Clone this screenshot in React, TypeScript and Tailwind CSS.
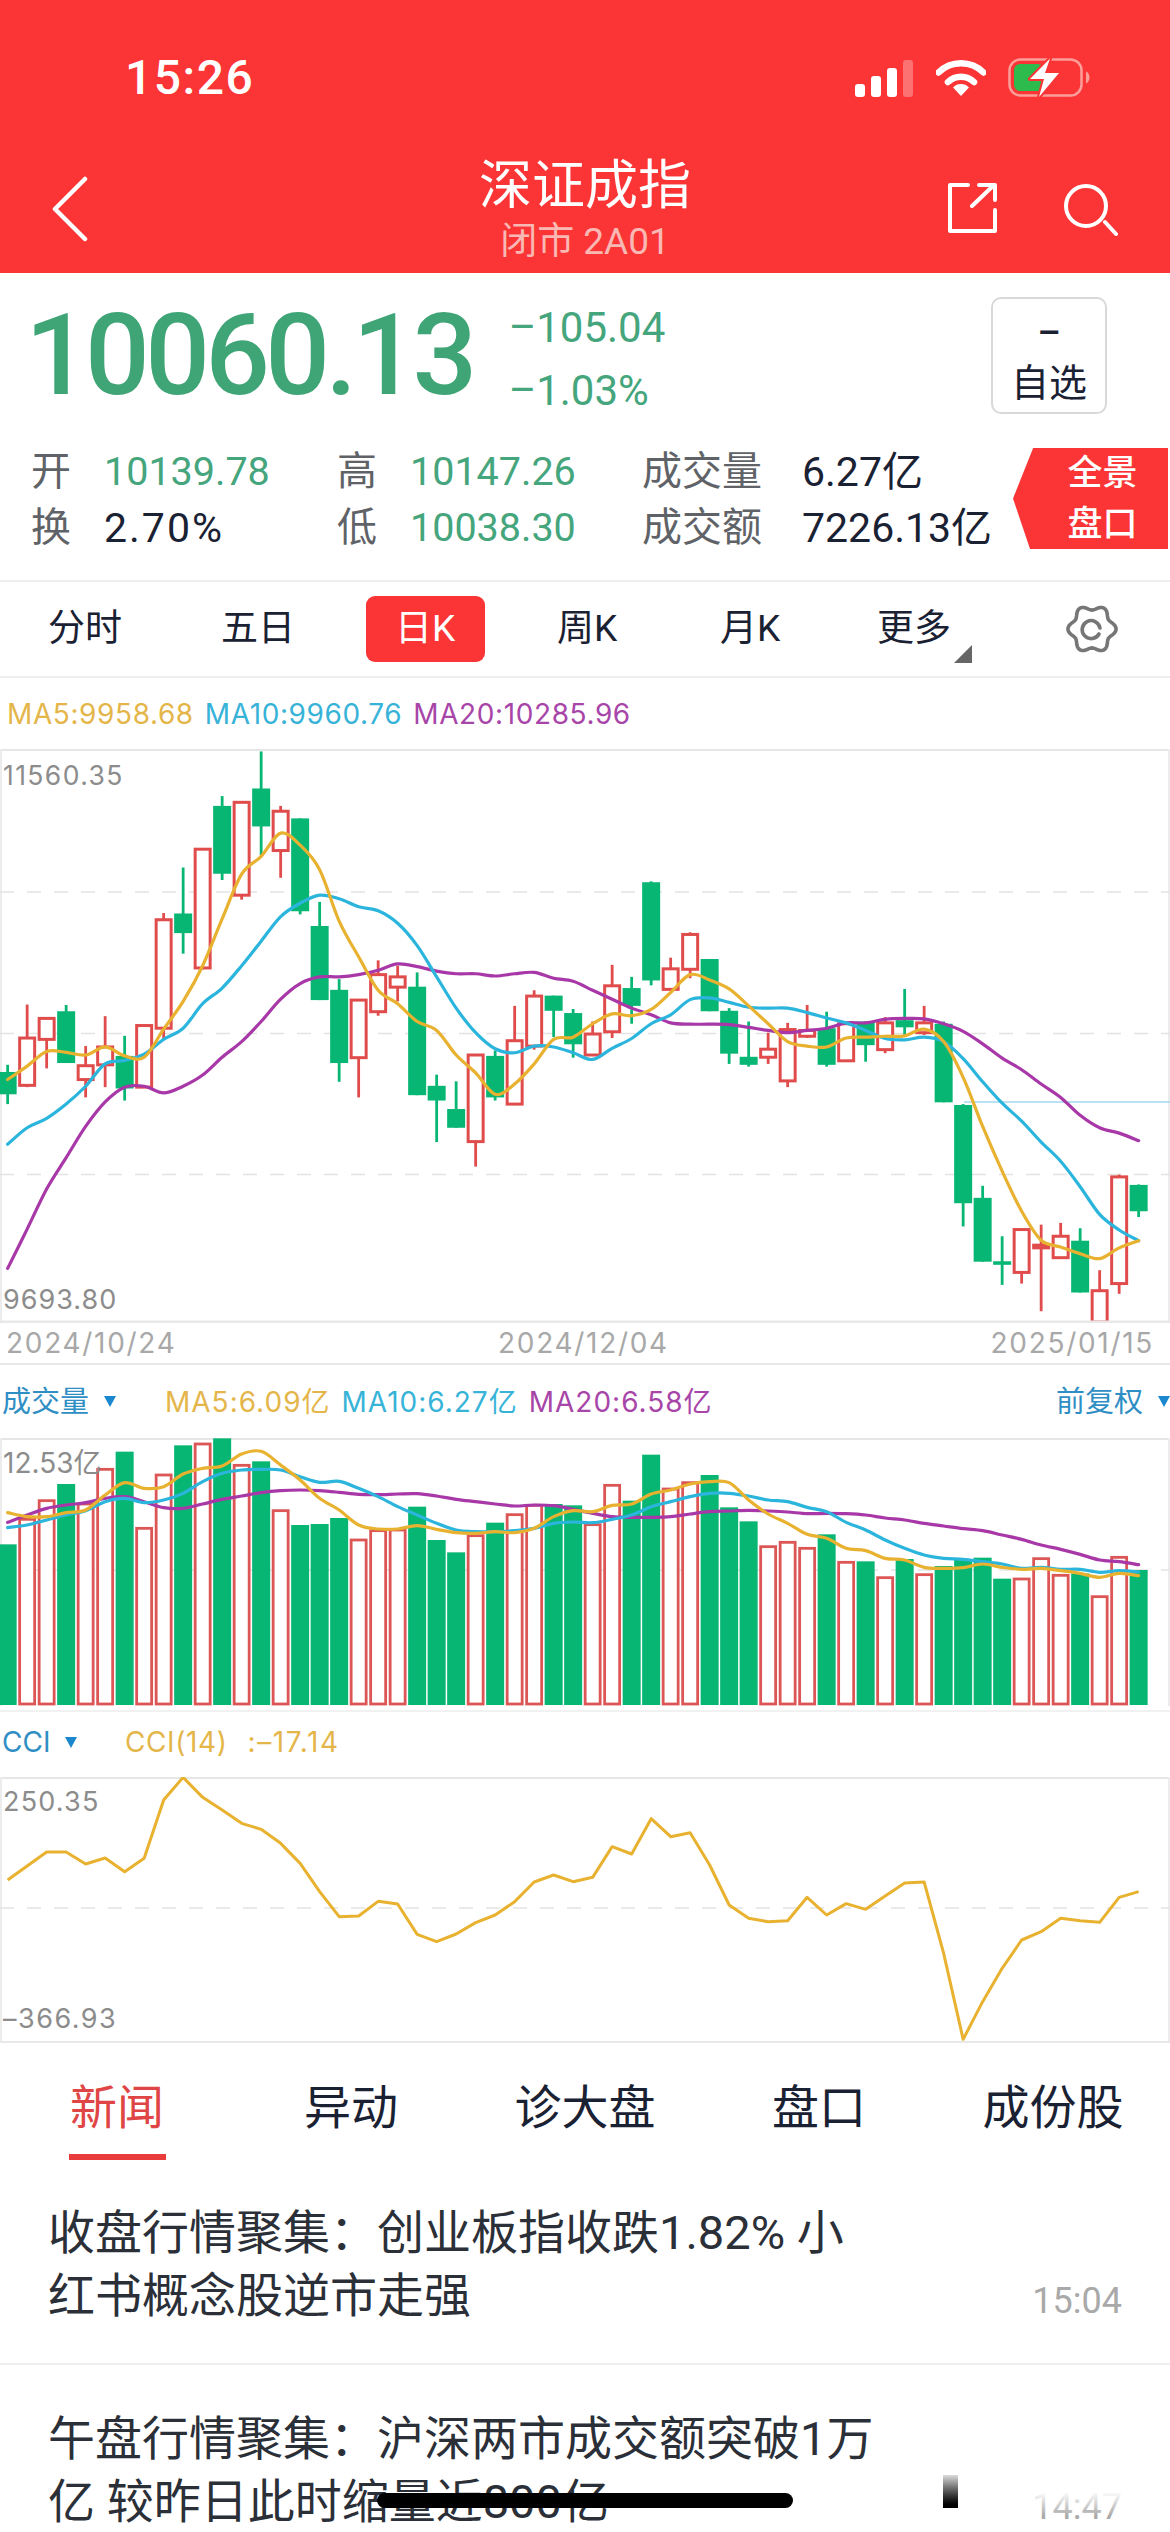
import React from "react";

type Candle = ["g" | "r", number, number, number, number];

// traced from the chart: [colour, high, body top, body bottom, low]
const candles: Candle[] = [
  ["g", 862, 878, 928, 950], ["r", 727, 802, 908, 912], ["r", 758, 758, 805, 870], ["g", 728, 742, 858, 858],
  ["r", 820, 864, 895, 935], ["r", 753, 822, 862, 912], ["g", 797, 842, 915, 942], ["r", 774, 774, 912, 912],
  ["r", 522, 537, 780, 805], ["g", 420, 523, 567, 613], ["r", 379, 379, 645, 648], ["g", 260, 282, 434, 448],
  ["r", 274, 274, 482, 492], ["g", 160, 243, 328, 392], ["r", 282, 294, 382, 443], ["g", 310, 310, 518, 525],
  ["g", 497, 551, 717, 717], ["g", 670, 694, 858, 900], ["r", 717, 717, 846, 935], ["r", 628, 660, 743, 752],
  ["r", 640, 665, 688, 720], ["g", 655, 687, 930, 930], ["g", 884, 909, 942, 1035], ["g", 899, 961, 1003, 1003],
  ["r", 840, 840, 1034, 1090], ["g", 830, 842, 935, 942], ["r", 730, 808, 950, 950], ["r", 695, 708, 820, 828],
  ["g", 707, 707, 741, 800], ["g", 737, 746, 816, 846], ["r", 765, 793, 840, 842], ["r", 638, 685, 788, 802],
  ["g", 665, 690, 730, 770], ["g", 451, 453, 673, 684], ["r", 622, 647, 693, 693], ["r", 565, 570, 648, 668],
  ["g", 625, 625, 742, 742], ["g", 735, 741, 837, 860], ["g", 765, 844, 862, 866], ["r", 790, 827, 845, 860],
  ["r", 768, 783, 898, 912], ["r", 728, 785, 798, 802], ["g", 743, 780, 862, 866], ["r", 770, 770, 853, 853],
  ["g", 765, 765, 818, 855], ["r", 755, 768, 828, 836], ["g", 692, 762, 778, 795], ["r", 730, 768, 790, 795],
  ["g", 765, 770, 946, 946], ["g", 950, 952, 1172, 1224], ["g", 1133, 1160, 1303, 1303], ["g", 1246, 1302, 1310, 1355],
  ["r", 1231, 1231, 1327, 1352], ["r", 1220, 1266, 1272, 1414], ["r", 1216, 1246, 1294, 1294], ["g", 1228, 1256, 1372, 1372],
  ["r", 1322, 1368, 1438, 1438], ["r", 1108, 1113, 1352, 1375], ["g", 1130, 1131, 1190, 1203],
];

const ma5 = [895, 865, 832, 834, 840, 822, 842, 845, 782, 720, 640, 535, 435, 395, 343, 370, 425, 540, 620, 695, 725, 765, 785, 840, 880, 928, 905, 860, 805, 800, 770, 748, 752, 738, 700, 660, 672, 692, 730, 770, 810, 820, 822, 802, 800, 798, 797, 782, 810, 890, 1000, 1100, 1190, 1255, 1270, 1285, 1296, 1272, 1256];
const ma10 = [1040, 1003, 982, 950, 910, 860, 852, 838, 805, 780, 725, 690, 640, 585, 530, 500, 482, 490, 508, 517, 545, 595, 665, 735, 790, 826, 835, 820, 822, 835, 850, 825, 803, 770, 750, 716, 712, 722, 733, 735, 735, 745, 757, 768, 785, 803, 806, 800, 810, 848, 900, 948, 988, 1035, 1078, 1135, 1197, 1232, 1256];
const ma20 = [1318, 1230, 1140, 1070, 1000, 945, 912, 910, 925, 910, 885, 845, 810, 765, 715, 680, 665, 665, 660, 650, 636, 642, 652, 658, 658, 663, 658, 655, 668, 675, 695, 715, 735, 750, 768, 771, 771, 772, 778, 785, 790, 785, 780, 768, 768, 760, 758, 759, 770, 787, 815, 847, 873, 905, 935, 975, 1003, 1015, 1032];

const volumes = [553, 478, 422, 372, 432, 328, 275, 505, 345, 256, 252, 235, 316, 304, 452, 495, 492, 474, 540, 512, 510, 440, 540, 577, 527, 488, 464, 436, 432, 436, 494, 376, 422, 284, 387, 368, 345, 442, 484, 560, 547, 565, 523, 607, 604, 653, 597, 644, 618, 598, 593, 656, 657, 596, 646, 640, 710, 592, 630];
const volMa5 = [458, 470, 470, 458, 450, 405, 368, 385, 380, 342, 325, 318, 282, 274, 315, 360, 415, 450, 495, 507, 507, 497, 508, 518, 520, 515, 518, 505, 470, 452, 455, 436, 432, 402, 390, 372, 365, 368, 420, 462, 490, 523, 535, 565, 572, 595, 600, 622, 625, 623, 612, 622, 628, 625, 632, 640, 652, 640, 647];
const volMa10 = [503, 495, 480, 465, 452, 425, 415, 428, 420, 400, 365, 340, 330, 328, 330, 350, 367, 364, 385, 410, 440, 465, 490, 510, 515, 515, 512, 505, 490, 486, 488, 478, 465, 440, 425, 410, 400, 400, 408, 420, 425, 442, 455, 487, 510, 540, 565, 585, 595, 598, 605, 612, 625, 622, 628, 628, 637, 632, 636];
const volMa20 = [487, 465, 445, 435, 428, 415, 410, 425, 443, 445, 432, 418, 408, 398, 392, 390, 392, 397, 403, 404, 402, 401, 408, 418, 425, 432, 438, 435, 437, 448, 460, 470, 472, 472, 470, 462, 455, 453, 451, 453, 456, 461, 460, 461, 465, 474, 480, 490, 498, 506, 512, 525, 538, 555, 568, 583, 600, 605, 614];

const cci = [540, 498, 456, 456, 492, 474, 515, 475, 300, 232, 292, 330, 370, 388, 430, 490, 575, 650, 648, 604, 612, 703, 725, 702, 668, 645, 605, 546, 525, 545, 532, 440, 462, 356, 410, 398, 495, 615, 655, 665, 662, 592, 645, 611, 628, 588, 549, 546, 760, 1018, 905, 805, 720, 695, 655, 662, 667, 592, 575];

const YELLOW = "#e8b230";
const BLUE = "#2bb5dc";
const PURPLE = "#a838a8";
const GREEN = "#08b674";
const RED = "#e04c4c";

const cx = (i: number) => 7.65 + 19.5 * i;
const priceY = (z: number) => z / 2.24 - 69;
const volY = (z: number) => z / 3 - 78;
const cciY = (z: number) => z / 3 - 77;

// catmull-rom through the points, the averages are smooth curves in the app
function smooth(values: number[], toY: (z: number) => number) {
  const pts = values.map((v, i) => [cx(i), toY(v)]);
  let d = `M${pts[0][0]} ${pts[0][1]}`;
  for (let i = 0; i < pts.length - 1; i++) {
    const p0 = pts[Math.max(i - 1, 0)];
    const p1 = pts[i];
    const p2 = pts[i + 1];
    const p3 = pts[Math.min(i + 2, pts.length - 1)];
    const c1x = p1[0] + (p2[0] - p0[0]) / 6;
    const c1y = p1[1] + (p2[1] - p0[1]) / 6;
    const c2x = p2[0] - (p3[0] - p1[0]) / 6;
    const c2y = p2[1] - (p3[1] - p1[1]) / 6;
    d += `C${c1x} ${c1y} ${c2x} ${c2y} ${p2[0]} ${p2[1]}`;
  }
  return d;
}

function Frame({ height }: { height: number }) {
  return (
    <>
      <line x1="0" y1="1" x2="1170" y2="1" stroke="#e6e6e6" strokeWidth="2" />
      <line x1="1" y1="0" x2="1" y2={height} stroke="#ececec" strokeWidth="2" />
      <line x1="1169" y1="0" x2="1169" y2={height} stroke="#ececec" strokeWidth="2" />
    </>
  );
}

function Dash({ y }: { y: number }) {
  return <line x1="0" y1={y} x2="1170" y2={y} stroke="#e3e3e3" strokeWidth="1.5" strokeDasharray="14 13" />;
}

function MaLines({ a, b, c, toY }: { a: number[]; b: number[]; c: number[]; toY: (z: number) => number }) {
  return (
    <g fill="none" strokeWidth="3.2" strokeLinejoin="round" strokeLinecap="round">
      <path d={smooth(c, toY)} stroke={PURPLE} />
      <path d={smooth(b, toY)} stroke={BLUE} />
      <path d={smooth(a, toY)} stroke={YELLOW} />
    </g>
  );
}

function PriceChart() {
  return (
    <div className="relative h-[574px]">
      <svg width="1170" height="574" viewBox="0 0 1170 574" className="block">
        <Frame height={574} />
        <Dash y={143} />
        <Dash y={284.5} />
        <Dash y={425.5} />
        <line x1="964" y1="353" x2="1170" y2="353" stroke="#a5d8f0" strokeWidth="1.5" />
        {candles.map(([kind, hi, top, bottom, lo], i) => {
          const color = kind === "g" ? GREEN : RED;
          const x = cx(i);
          return (
            <g key={i}>
              <line x1={x} y1={priceY(hi)} x2={x} y2={priceY(lo)} stroke={color} strokeWidth="2.8" />
              {kind === "g" ? (
                <rect x={x - 9} y={priceY(top)} width="18" height={priceY(bottom) - priceY(top)} fill={color} />
              ) : (
                <rect x={x - 7.5} y={priceY(top)} width="15" height={priceY(bottom) - priceY(top)} fill="#fff" stroke={color} strokeWidth="3" />
              )}
            </g>
          );
        })}
        <MaLines a={ma5} b={ma10} c={ma20} toY={priceY} />
        <line x1="0" y1="573" x2="1170" y2="573" stroke="#e8e8e8" strokeWidth="3" />
      </svg>
      <span className="absolute left-[3px] top-[11px] text-[26.5px] leading-[30px] tracking-[1.4px] text-[#8c8c8c]">11560.35</span>
      <span className="absolute left-[3px] top-[536px] text-[27px] leading-[30px] tracking-[1px] text-[#8c8c8c]">9693.80</span>
    </div>
  );
}

function VolumeChart() {
  return (
    <div className="relative h-[274px]">
      <svg width="1170" height="274" viewBox="0 0 1170 274" className="block">
        <Frame height={268} />
        <Dash y={132} />
        {volumes.map((top, i) => {
          const x = cx(i);
          const y = volY(top);
          return candles[i][0] === "g" ? (
            <rect key={i} x={x - 9} y={y} width="18" height={267 - y} fill={GREEN} />
          ) : (
            <rect key={i} x={x - 7.5} y={y} width="15" height={266 - y} fill="#fff" stroke="#dc5656" strokeWidth="2.8" />
          );
        })}
        <MaLines a={volMa5} b={volMa10} c={volMa20} toY={volY} />
        <line x1="0" y1="273" x2="1170" y2="273" stroke="#f1f1f1" strokeWidth="2" />
      </svg>
      <span className="absolute left-[3px] top-[9px] text-[28px] leading-[32px] text-[#8c8c8c]">12.53亿</span>
    </div>
  );
}

function CciChart() {
  const line = cci.map((v, i) => `${cx(i)},${cciY(v)}`).join(" ");
  return (
    <div className="relative h-[266px]">
      <svg width="1170" height="266" viewBox="0 0 1170 266" className="block">
        <Frame height={264} />
        <Dash y={131} />
        <polyline points={line} fill="none" stroke={YELLOW} strokeWidth="3" strokeLinejoin="round" />
        <line x1="0" y1="265" x2="1170" y2="265" stroke="#e8e8e8" strokeWidth="2" />
      </svg>
      <span className="absolute left-[3px] top-[10px] text-[27px] leading-[30px] tracking-[1.2px] text-[#8c8c8c]">250.35</span>
      <span className="absolute left-[3px] top-[227px] text-[27px] leading-[30px] tracking-[1.5px] text-[#8c8c8c]">–366.93</span>
    </div>
  );
}

function SmallArrow() {
  return <span className="inline-block border-x-[6px] border-t-[11px] border-x-transparent border-t-[#1b87cf]" />;
}

function StatusIcons() {
  return (
    <div className="flex items-center pr-[80px]">
      <svg width="58" height="38" viewBox="0 0 58 38" fill="#fff">
        <rect x="0" y="25" width="10" height="13" rx="3" />
        <rect x="16" y="17" width="10" height="21" rx="3" />
        <rect x="32" y="9" width="10" height="29" rx="3" />
        <rect x="48" y="1" width="10" height="37" rx="3" fillOpacity="0.3" />
      </svg>
      <svg width="50" height="38" viewBox="0 0 50 38" className="ml-[23px]">
        <path d="M2.5 13.5a32 32 0 0 1 45 0" fill="none" stroke="#fff" strokeWidth="6.5" strokeLinecap="round" />
        <path d="M12 23a19 19 0 0 1 26 0" fill="none" stroke="#fff" strokeWidth="6.5" strokeLinecap="round" />
        <path d="M25 37L17 28.500a11 11 0 0 1 16 0z" fill="#fff" />
      </svg>
      <svg width="82" height="40" viewBox="0 0 82 40" className="ml-[22px]">
        <rect x="1.5" y="1.5" width="72" height="36" rx="11" fill="none" stroke="#fb9d99" strokeWidth="2.5" />
        <rect x="6" y="6" width="30" height="27" rx="6" fill="#2dbb4e" />
        <path d="M78 13.5c2.500 1 3.500 3.500 3.500 6s-1 5-3.500 6z" fill="#fb9d99" />
        <path d="M42 .5L22 21h14l-5 18L51 15H37z" fill="#fff" stroke="#fb3535" strokeWidth="4" strokeLinejoin="round" paintOrder="stroke" />
      </svg>
    </div>
  );
}

function Header() {
  return (
    <div className="h-[273px] bg-[#fb3535] text-white">
      <div className="flex h-[156px] items-center justify-between pl-[125px]">
        <span className="text-[48px] font-medium leading-none tracking-[1.5px]">15:26</span>
        <StatusIcons />
      </div>
      <div className="grid grid-cols-[1fr_auto_1fr]">
        <div className="pl-[52px] pt-[20px]">
          <svg width="36" height="66" viewBox="0 0 36 66" fill="none" stroke="#fff" strokeWidth="4.5" strokeLinecap="round" strokeLinejoin="round">
            <path d="M33 3L3 33l30 30" />
          </svg>
        </div>
        <div className="flex flex-col items-center">
          <div className="text-[53px] leading-[60px]">深证成指</div>
          <div className="mt-[4px] text-[37px] leading-[44px] text-[#f9b8b4]">闭市 2A01</div>
        </div>
        <div className="flex justify-end gap-[65px] pr-[52px] pt-[27px]">
          <svg width="49" height="50" viewBox="0 0 49 50" fill="none" stroke="#fff" strokeWidth="4" strokeLinecap="round" strokeLinejoin="round">
            <path d="M20 2H2v46h45V27" />
            <path d="M24 23L46 2" />
            <path d="M31 2h16v15" />
          </svg>
          <svg width="56" height="54" viewBox="0 0 56 54" fill="none" stroke="#fff" strokeWidth="4" strokeLinecap="round">
            <circle cx="24" cy="23" r="20" />
            <path d="M43 39l11 12" />
          </svg>
        </div>
      </div>
    </div>
  );
}

function Quote() {
  const label = "text-[40px] leading-[56px] text-[#5f6368]";
  const up = "text-[39.5px] leading-[56px] text-[#45a57c]";
  const dark = "text-[41px] leading-[56px] text-[#1a2133]";
  return (
    <div className="h-[309px] border-b-2 border-[#eeeeee] pt-[24px]">
      <div className="flex h-[117px] items-center pl-[25px] pr-[63px]">
        <div className="text-[114px] font-medium leading-[117px] tracking-[-4.7px] text-[#3fa476]">10060.13</div>
        <div className="ml-[36px] mt-[7px] flex flex-col gap-[19px] text-[42px] leading-[44px] text-[#45a57c]">
          <span>–105.04</span>
          <span>–1.03%</span>
        </div>
        <div className="ml-auto flex h-[117px] w-[116px] flex-col items-center rounded-[10px] border-2 border-[#d9d9d9] text-[#1a2133]">
          <span className="mt-[14px] text-[36px] font-medium leading-[40px]">–</span>
          <span className="mt-[8px] text-[38px] leading-[44px]">自选</span>
        </div>
      </div>
      <div className="mt-[30px] flex pl-[31px]">
        <div className="grid w-[982px] grid-cols-[73px_233px_73px_232px_160px_211px] auto-rows-[56px]">
          <span className={label}>开</span>
          <span className={up}>10139.78</span>
          <span className={label}>高</span>
          <span className={up}>10147.26</span>
          <span className={label}>成交量</span>
          <span className={dark}>6.27亿</span>
          <span className={label}>换</span>
          <span className={`${dark} tracking-[2px]`}>2.70%</span>
          <span className={label}>低</span>
          <span className={up}>10038.30</span>
          <span className={label}>成交额</span>
          <span className={dark}>7226.13亿</span>
        </div>
        <div className="mt-[4px] flex h-[101px] w-[155px] flex-col items-center justify-center bg-[#fb3535] pl-[24px] text-[35px] font-medium leading-[51px] text-white [clip-path:polygon(13%_0,100%_0,100%_100%,11%_100%,0_50%)]">
          <span>全景</span>
          <span>盘口</span>
        </div>
      </div>
    </div>
  );
}

function GearIcon() {
  const pts: string[] = [];
  for (let a = 0; a < 360; a += 5) {
    const t = (a * Math.PI) / 180;
    const r = 21.5 + 2.6 * Math.cos(6 * t);
    pts.push(`${26 + r * Math.cos(t)},${26 + r * Math.sin(t)}`);
  }
  return (
    <svg width="52" height="52" viewBox="0 0 52 52" fill="none" stroke="#767676" strokeWidth="3.6" strokeLinejoin="round" strokeLinecap="round">
      <polygon points={pts.join(" ")} />
      <path d="M33 31a9 9 0 1 1 1-6" />
    </svg>
  );
}

function PeriodTabs() {
  const tab = "flex items-center justify-center text-[37px] text-[#1a2133]";
  return (
    <div className="grid h-[96px] grid-cols-[170px_176px_158px_166px_160px_168px_172px] border-b-2 border-[#eeeeee]">
      <div className={tab}>分时</div>
      <div className={tab}>五日</div>
      <div className="flex items-center justify-center">
        <div className="flex h-[66px] w-[119px] items-center justify-center rounded-[9px] bg-[#fb3535] text-[37px] text-white">日K</div>
      </div>
      <div className={tab}>周K</div>
      <div className={tab}>月K</div>
      <div className={`relative ${tab}`}>
        更多
        <span className="absolute left-[124px] top-[63px] border-b-[18px] border-l-[18px] border-b-[#666666] border-l-transparent" />
      </div>
      <div className="flex items-center justify-center pl-[16px]">
        <GearIcon />
      </div>
    </div>
  );
}

function NewsItem({ lines, time }: { lines: string[]; time: string }) {
  return (
    <div className="flex items-end justify-between pl-[48px] pr-[48px]">
      <div className="text-[47px] leading-[63px] text-[#2b2f38]">
        {lines.map((line) => (
          <div key={line}>{line}</div>
        ))}
      </div>
      <span className="mb-[8px] text-[36px] leading-[36px] text-[#a9a9a9]">{time}</span>
    </div>
  );
}

function News() {
  const tab = "flex flex-1 flex-col items-center";
  return (
    <div>
      <div className="flex h-[117px] pt-[37px] text-[47px] leading-[56px] text-[#1a2133]">
        <div className={`${tab} text-[#e04545]`}>
          <span>新闻</span>
          <span className="mt-[18px] h-[6px] w-[97px] bg-[#e83c3c]" />
        </div>
        <div className={tab}>异动</div>
        <div className={tab}>诊大盘</div>
        <div className={tab}>盘口</div>
        <div className={tab}>成份股</div>
      </div>
      <div className="border-b-2 border-[#eeeeee] pb-[36px] pt-[41px]">
        <NewsItem lines={["收盘行情聚集：创业板指收跌1.82% 小", "红书概念股逆市走强"]} time="15:04" />
      </div>
      <div className="pt-[42px]">
        <NewsItem lines={["午盘行情聚集：沪深两市成交额突破1万", "亿 较昨日此时缩量近800亿"]} time="14:47" />
      </div>
    </div>
  );
}

export default function App() {
  return (
    <div className="relative h-[2532px] w-[1170px] overflow-hidden bg-white font-['Roboto','Noto_Sans_CJK_SC',sans-serif]">
      <Header />
      <Quote />
      <PeriodTabs />
      <div className="font-['Inter','Noto_Sans_CJK_SC',sans-serif]">
        <div className="flex h-[71px] items-center gap-[11px] pl-[7px] text-[28px] tracking-[0.6px]">
          <span className="text-[#e4b64a]">MA5:9958.68</span>
          <span className="text-[#38b3d8]">MA10:9960.76</span>
          <span className="text-[#a845a8]">MA20:10285.96</span>
        </div>
        <PriceChart />
        <div className="flex h-[42px] items-center justify-between border-b-2 border-[#e8e8e8] pl-[6px] pr-[16px] text-[28px] tracking-[1.7px] text-[#a8a8a8]">
          <span>2024/10/24</span>
          <span>2024/12/04</span>
          <span>2025/01/15</span>
        </div>
        <div className="flex h-[73px] items-center text-[28px]">
          <div className="flex w-[165px] items-center gap-[15px] pl-[2px] text-[29px] text-[#2f8ec4]">
            <span>成交量</span>
            <SmallArrow />
          </div>
          <div className="flex gap-[11px] tracking-[1px]">
            <span className="text-[#e4b64a]">MA5:6.09亿</span>
            <span className="text-[#38b3d8]">MA10:6.27亿</span>
            <span className="text-[#a845a8]">MA20:6.58亿</span>
          </div>
          <div className="ml-auto flex items-center gap-[15px] text-[29px] text-[#2f8ec4]">
            <span>前复权</span>
            <SmallArrow />
          </div>
        </div>
        <VolumeChart />
        <div className="flex h-[65px] items-center pb-[5px] text-[28px]">
          <div className="flex w-[125px] items-center gap-[15px] pl-[2px] text-[#2f8ec4]">
            <span>CCI</span>
            <SmallArrow />
          </div>
          <span className="tracking-[0.6px] text-[#e4b64a]">CCI(14)</span>
          <span className="ml-[20px] tracking-[1.6px] text-[#e4b64a]">:–17.14</span>
        </div>
        <CciChart />
      </div>
      <News />
      {/* smudge and home bar sitting on top of the last row */}
      <div className="absolute left-[865px] top-[2472px] h-[44px] w-[280px] bg-gradient-to-b from-white via-white/90 to-white/0" />
      <div className="absolute left-[943px] top-[2475px] h-[33px] w-[15px] bg-gradient-to-b from-[#dddddd] to-black" />
      <div className="absolute left-[377px] top-[2493px] h-[15px] w-[416px] rounded-full bg-black" />
    </div>
  );
}
